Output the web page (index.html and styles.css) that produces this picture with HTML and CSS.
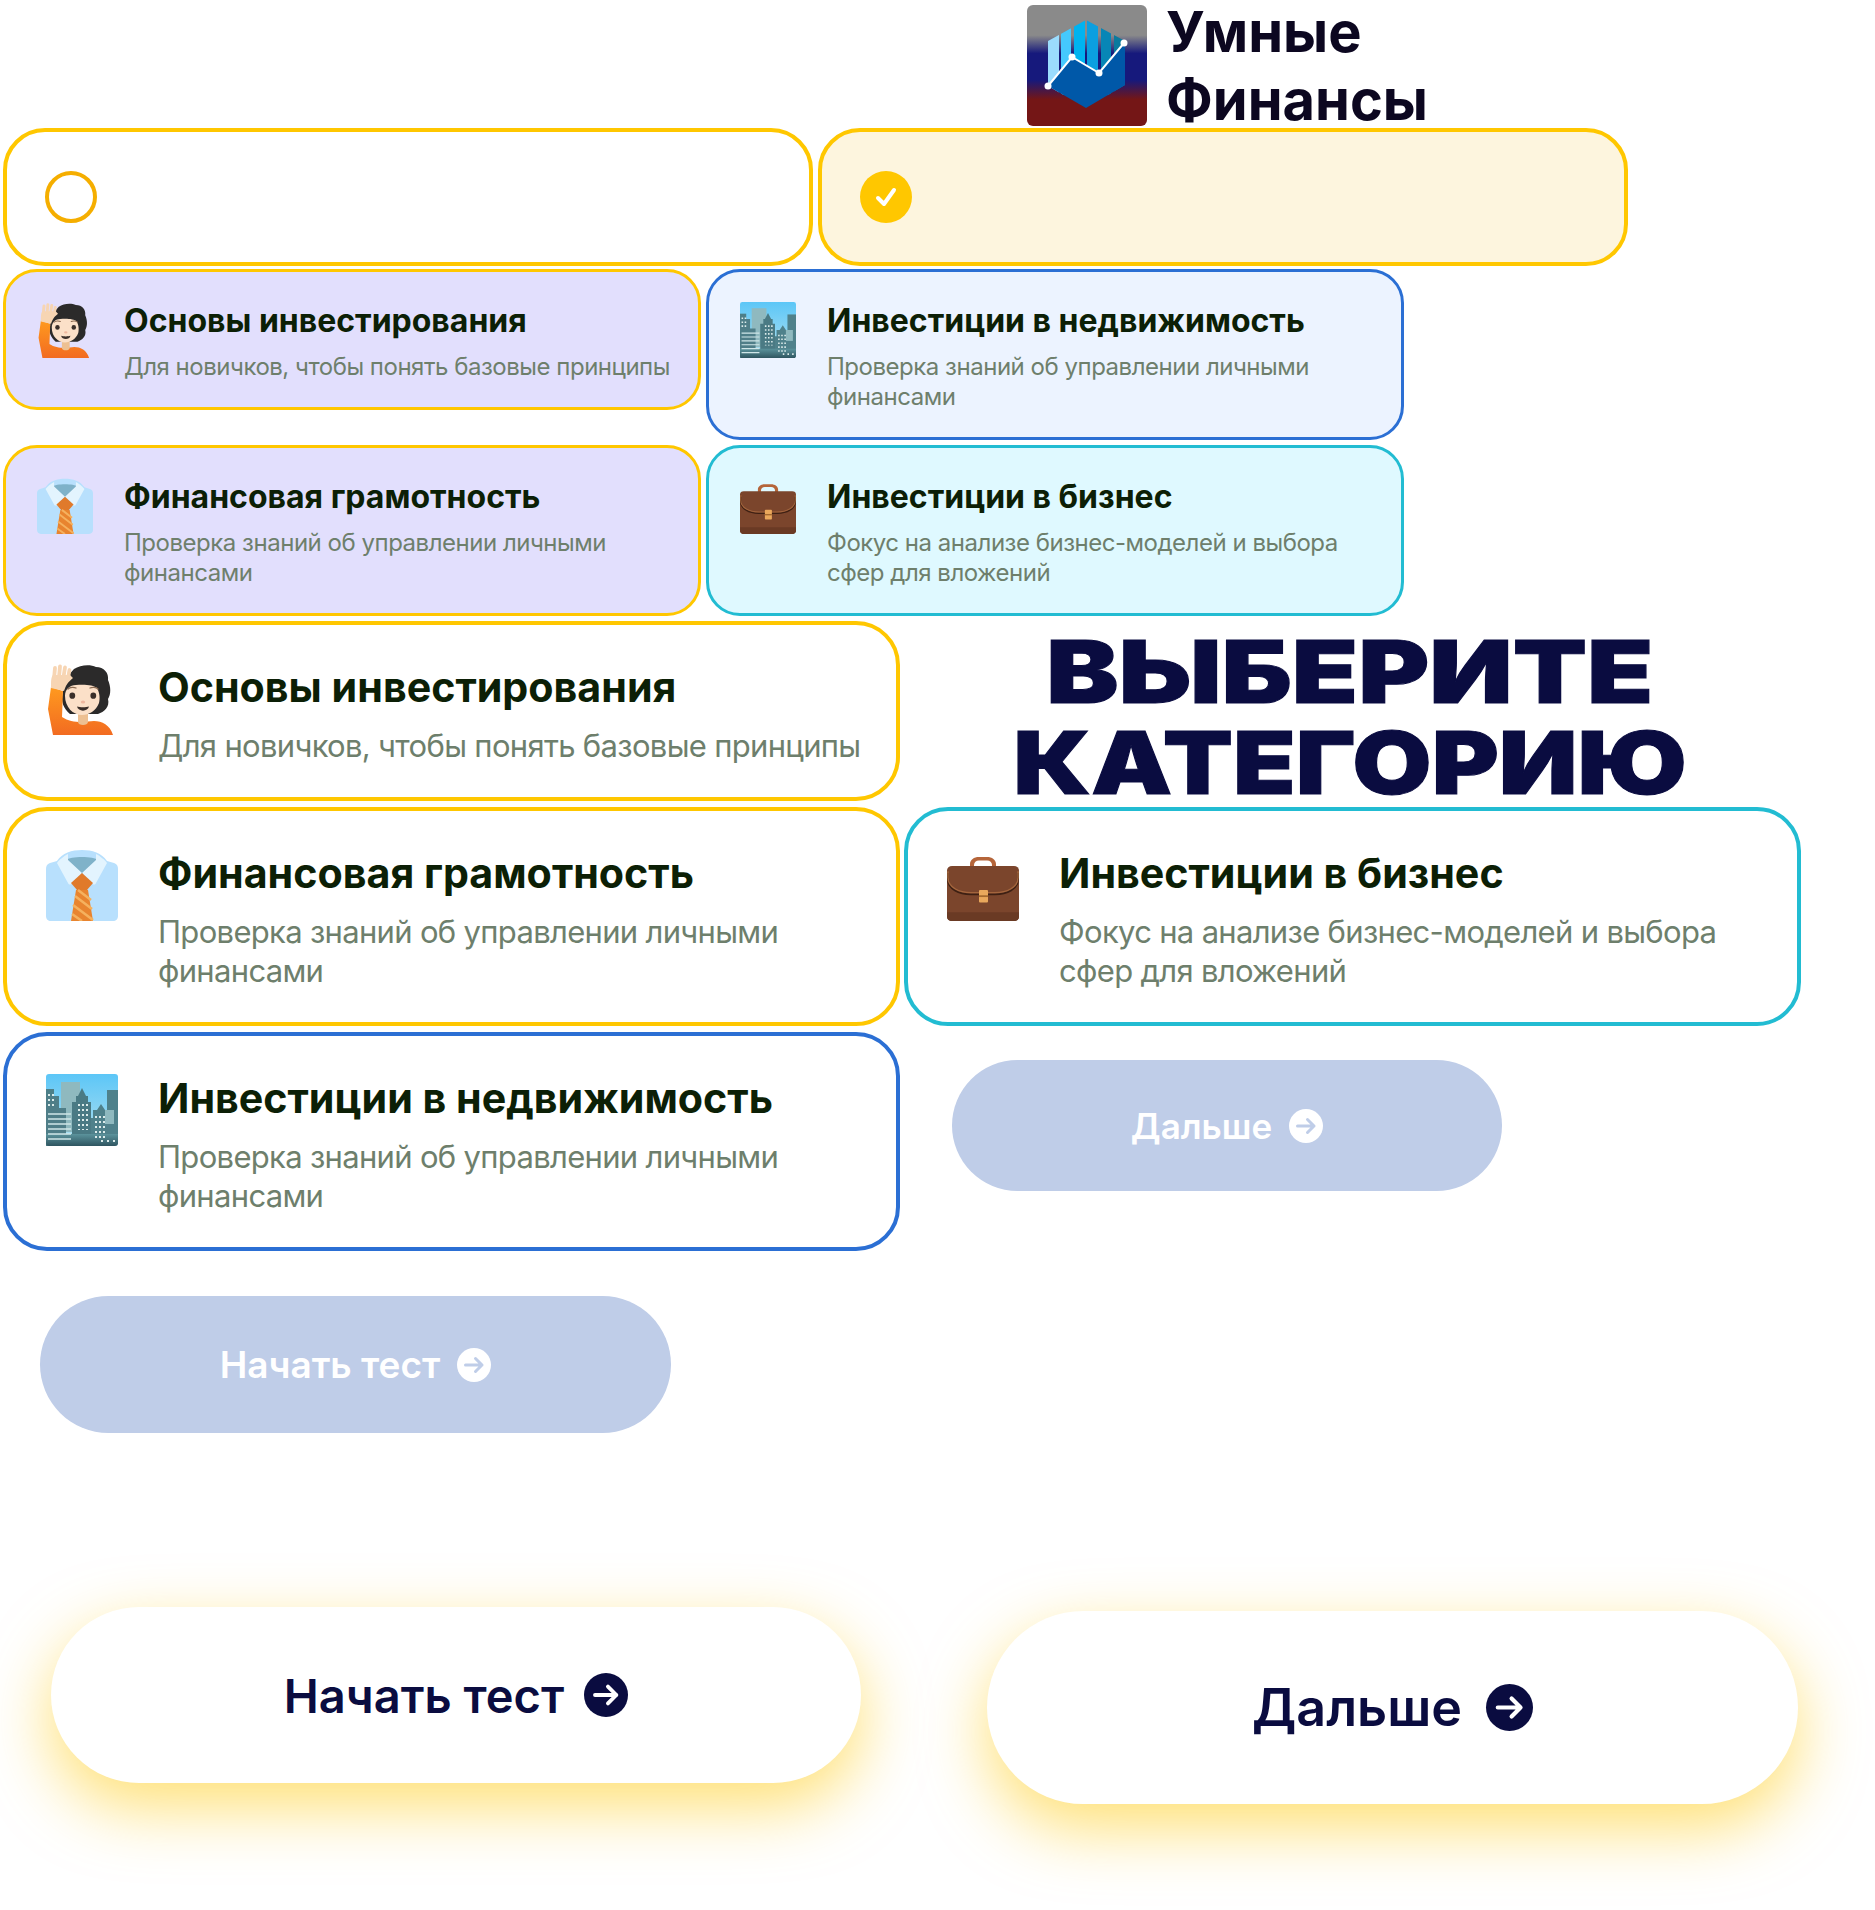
FILE: index.html
```html
<!DOCTYPE html>
<html lang="ru">
<head>
    <meta charset="UTF-8">
    <meta name="viewport" content="width=device-width, initial-scale=1.0">
    <title>Умные Финансы</title>
    <link rel="stylesheet" href="styles.css">
</head>
<body>
    <svg class="sprite" aria-hidden="true">
        <defs>
            <linearGradient id="logoBg" x1="0" y1="0" x2="0" y2="1">
                <stop offset="0.25" stop-color="#8a8a8a"/>
                <stop offset="0.4" stop-color="#16197c"/>
                <stop offset="0.62" stop-color="#16197c"/>
                <stop offset="0.78" stop-color="#741616"/>
            </linearGradient>
            <linearGradient id="sleeve" x1="0" y1="0" x2="0" y2="1">
                <stop offset="0" stop-color="#ff9a1f"/>
                <stop offset="1" stop-color="#f26b21"/>
            </linearGradient>
            <linearGradient id="sky" x1="0" y1="0" x2="0" y2="1">
                <stop offset="0" stop-color="#5cc6f7"/>
                <stop offset="1" stop-color="#b5e2ef"/>
            </linearGradient>
            <linearGradient id="street" x1="0" y1="0" x2="0" y2="1">
                <stop offset="0" stop-color="#5b939c"/>
                <stop offset="1" stop-color="#2f5560"/>
            </linearGradient>
            <clipPath id="hex"><path d="M21 36 59 15 98 36V80L59 103 21 81Z"/></clipPath>
        </defs>
        <symbol id="arrow" viewBox="0 0 34 34">
            <path d="M8.500 17H25M18.500 10.500 25 17 18.500 23.500" fill="none" stroke="currentColor" stroke-width="3" stroke-linecap="round" stroke-linejoin="round"/>
        </symbol>
        <symbol id="person" viewBox="0 0 72 72">
            <path d="M28 6C34 2 44 1 50 4 58 4 63 10 62 17 65 24 65 31 62 36 64 44 58 49 52 51L24 51C18 46 14 38 17 30 16 22 22 12 28 6Z" fill="#2b2a2a"/>
            <path d="M5 24 17 28 16 54C22 58 28 59 36 59L48 58C56 58 64 62 67 72H7L2 46Z" fill="url(#sleeve)"/>
            <path d="M32 48H42V59C42 63 32 63 32 59Z" fill="#edc092"/>
            <path d="M19 33C19 26 24 22 30 22 38 21 48 22 51 25 54 30 54 36 53 40 50 48 43 52 36 52 27 52 19 44 19 33Z" fill="#fbe0c8"/>
            <path d="M5 25C5 18 5 14 7 12H24L27 15C22 19 20 22 18 28Z" fill="#f7d5b3"/>
            <path d="M8 16 9 5M13 14 14 3.500M17.500 14 19 4.500M22 15 23.500 7" stroke="#f7d5b3" stroke-width="3.800" stroke-linecap="round" fill="none"/>
            <ellipse cx="26.300" cy="32.700" rx="2.900" ry="3.100" fill="#3a2f2a"/>
            <ellipse cx="47.300" cy="32.700" rx="2.900" ry="3.100" fill="#3a2f2a"/>
            <path d="M22 26C24 24 28 24 30 25M44 25C46 24 50 24 52 26" fill="none" stroke="#8a6a52" stroke-width="1.300" stroke-linecap="round"/>
            <ellipse cx="37" cy="39" rx="2.200" ry="1.500" fill="#efb8a0"/>
            <path d="M31 43.500C34 44.500 40 44.500 43 43.500 42 49 32 49 31 43.500Z" fill="#3a2f2a"/>
        </symbol>
        <symbol id="shirt" viewBox="0 0 72 72">
            <path d="M11 12C16 4 26 1 36 1 46 1 56 4 61 12L68 14C71 15 72 17 72 20V67C72 70 70 72 67 72H5C2 72 0 70 0 67V20C0 17 1 15 4 14Z" fill="#b8e0fd"/>
            <path d="M20 11C24 7 48 7 52 11L36 25Z" fill="#7fb2c9"/>
            <path d="M22 5C18 7 13 11 11 14L22 34C23 36 25 36 26 34L36 24 22 11Z" fill="#e3f4fe"/>
            <path d="M50 5C54 7 59 11 61 14L50 34C49 36 47 36 46 34L36 24 50 11Z" fill="#e3f4fe"/>
            <path d="M36 24 47 34 41 41H31L25 34Z" fill="#e07a2b"/>
            <path d="M30 41H42L47 72H25Z" fill="#e8842f"/>
            <path d="M29 47 46 60M27 56 47 71M26 65 36 72M32 41 45 51" stroke="#f5b15e" stroke-width="2.500" fill="none"/>
        </symbol>
        <symbol id="city" viewBox="0 0 72 72">
            <rect width="72" height="72" rx="3" fill="url(#sky)"/>
            <rect x="15" y="8" width="19" height="50" fill="#8fb9bf"/>
            <path d="M0 15H8V20H8V70H0Z" fill="#4d7f88"/>
            <path d="M8 22H13V34H20V72H0V22Z" fill="#4f7e88"/>
            <path d="M30 22H32L36 14 40 22H42V28H45V62H26V28H30Z" fill="#4a7a84"/>
            <path d="M45 44H47V36H51L55 30 59 36H62V40H72V70H45Z" fill="#4f818b"/>
            <rect x="61" y="16" width="11" height="28" fill="#4f818b"/>
            <rect x="59" y="36" width="9" height="14" fill="#8fb9bf"/>
            <path d="M0 60H72V69C72 71 71 72 69 72H3C1 72 0 71 0 69Z" fill="url(#street)"/>
            <path d="M2 40H25M2 45H25M2 50H25M2 55H25M2 60H25M2 65H25" stroke="#cfe6e8" stroke-width="1.500"/>
            <path d="M3 20V32M7 20V32M33 30V56M37 30V56M41 30V56M50 42V64M54 42V64M58 42V64M56 66V70M62 66V70M68 66V70" stroke="#dcebea" stroke-width="2" stroke-dasharray="2 3"/>
        </symbol>
        <symbol id="case" viewBox="0 0 72 72">
            <g transform="translate(0 8) scale(1 0.89)">
                <path d="M23 14V8C23 3 27 0 32 0H40C45 0 49 3 49 8V14H45V9C45 6 43 4 40 4H32C29 4 27 6 27 9V14Z" fill="#b5653a"/>
                <rect x="0" y="10" width="72" height="62" rx="5" fill="#7b452c"/>
                <path d="M0 62H72V67C72 70 70 72 67 72H5C2 72 0 70 0 67Z" fill="#6a3a24"/>
                <path d="M1 18V25C1 36 12 42 24 42H48C60 42 71 36 71 25V18" fill="none" stroke="#3e2013" stroke-width="2"/>
                <path d="M1 16V23C1 34 12 40 24 40H48C60 40 71 34 71 23V16" fill="none" stroke="#a3653d" stroke-width="1.500"/>
                <rect x="32" y="37" width="9" height="14" rx="1" fill="#eaa85c"/>
                <rect x="32" y="43" width="9" height="2" fill="#a66a2e"/>
            </g>
        </symbol>
    </svg>

    <header class="top">
        <svg class="logo" viewBox="0 0 120 121">
            <rect width="120" height="121" rx="6" fill="url(#logoBg)"/>
            <g clip-path="url(#hex)">
                <rect x="21" y="10" width="11" height="80" fill="#9bdcfd"/>
                <rect x="34" y="10" width="10" height="80" fill="#45c9fd"/>
                <rect x="47" y="10" width="11" height="80" fill="#00b3f0"/>
                <rect x="60" y="10" width="11" height="80" fill="#0b9fe0"/>
                <rect x="74" y="10" width="10" height="80" fill="#0786b6"/>
                <rect x="87" y="10" width="11" height="80" fill="#0a7a9e"/>
                <path d="M21 81 45 52 72 68 98 38V110H21Z" fill="#0058a8"/>
            </g>
            <path d="M21 81 45 52 72 68 97 38" fill="none" stroke="#fff" stroke-width="2"/>
            <circle cx="21" cy="81" r="3.500" fill="#fff"/>
            <circle cx="45" cy="52" r="3.500" fill="#fff"/>
            <circle cx="72" cy="68" r="3.500" fill="#fff"/>
            <circle cx="97" cy="38" r="3.500" fill="#fff"/>
        </svg>
        <div class="brand">Умные<br>Финансы</div>
    </header>

    <section class="radios">
        <div class="radio">
            <span class="dot"></span>
        </div>
        <div class="radio radio-on">
            <span class="dot dot-on">
                <svg viewBox="0 0 52 52"><path d="M18 27 24 33 34 19" fill="none" stroke="#fff" stroke-width="4" stroke-linecap="round" stroke-linejoin="round"/></svg>
            </span>
        </div>
    </section>

    <section class="small-grid">
        <div class="card small lilac">
            <svg class="icon"><use href="#person"/></svg>
            <div>
                <h3>Основы инвестирования</h3>
                <p>Для новичков, чтобы понять базовые принципы</p>
            </div>
        </div>
        <div class="card small sky">
            <svg class="icon"><use href="#city"/></svg>
            <div>
                <h3>Инвестиции в недвижимость</h3>
                <p>Проверка знаний об управлении личными финансами</p>
            </div>
        </div>
        <div class="card small lilac">
            <svg class="icon"><use href="#shirt"/></svg>
            <div>
                <h3>Финансовая грамотность</h3>
                <p>Проверка знаний об управлении личными финансами</p>
            </div>
        </div>
        <div class="card small aqua">
            <svg class="icon"><use href="#case"/></svg>
            <div>
                <h3>Инвестиции в бизнес</h3>
                <p>Фокус на анализе бизнес-моделей и выбора сфер для вложений</p>
            </div>
        </div>
    </section>

    <section class="big-cols">
        <div class="col">
            <div class="card big yellow first">
                <svg class="icon"><use href="#person"/></svg>
                <div>
                    <h3>Основы инвестирования</h3>
                    <p>Для новичков, чтобы понять базовые принципы</p>
                </div>
            </div>
            <div class="card big yellow">
                <svg class="icon"><use href="#shirt"/></svg>
                <div>
                    <h3>Финансовая грамотность</h3>
                    <p>Проверка знаний об управлении личными финансами</p>
                </div>
            </div>
            <div class="card big blue">
                <svg class="icon"><use href="#city"/></svg>
                <div>
                    <h3>Инвестиции в недвижимость</h3>
                    <p>Проверка знаний об управлении личными финансами</p>
                </div>
            </div>
            <button class="btn off start-off">Начать тест <svg class="arrow"><use href="#arrow"/></svg></button>
        </div>
        <div class="col">
            <h1><span class="line-one">ВЫБЕРИТЕ</span><br><span class="line-two">КАТЕГОРИЮ</span></h1>
            <div class="card big teal">
                <svg class="icon"><use href="#case"/></svg>
                <div>
                    <h3>Инвестиции в бизнес</h3>
                    <p>Фокус на анализе бизнес-моделей и выбора сфер для вложений</p>
                </div>
            </div>
            <button class="btn off next-off">Дальше <svg class="arrow"><use href="#arrow"/></svg></button>
        </div>
    </section>

    <section class="glow-row">
        <button class="btn glow start-on">Начать тест <svg class="arrow"><use href="#arrow"/></svg></button>
        <button class="btn glow next-on">Дальше <svg class="arrow"><use href="#arrow"/></svg></button>
    </section>
</body>
</html>
```

FILE: styles.css
```css
* {
    box-sizing: border-box;
}
body {
    margin: 0;
    padding: 0 0 106px 3px;
    background: white;
    font-family: Inter, 'Liberation Sans', sans-serif;
    overflow-x: hidden;
}
.sprite {
    position: absolute;
    width: 0;
    height: 0;
}
h1, h3, p {
    margin: 0;
}

/* logo row */
.top {
    display: flex;
    align-items: center;
    gap: 19px;
    height: 128px;
    padding: 3px 0 0 1024px;
}
.logo {
    width: 120px;
    height: 121px;
    flex: none;
}
.brand {
    font-size: 56px;
    line-height: 68px;
    font-weight: 700;
    color: #0c0720;
}

/* radio cards */
.radios {
    display: flex;
    gap: 5px;
}
.radio {
    width: 810px;
    height: 138px;
    padding: 0 38px;
    display: flex;
    align-items: center;
    border: 4px solid #ffc700;
    border-radius: 42px;
    background: white;
}
.radio-on {
    background: #fdf5de;
}
.dot {
    width: 52px;
    height: 52px;
    border: 4px solid #f5ae00;
    border-radius: 50%;
}
.dot-on {
    border: none;
    background: #ffc700;
}
.dot-on svg {
    display: block;
}

/* cards */
.card {
    display: flex;
    align-items: flex-start;
    background: white;
}
.card h3 {
    color: #0c1f06;
    font-weight: 700;
}
.card p {
    color: #6e7f6c;
    letter-spacing: -0.02em;
}
.icon {
    flex: none;
}
.small {
    padding: 30px 20px 25px 31px;
    gap: 31px;
    border: 3px solid #ffc700;
    border-radius: 34px;
}
.small .icon {
    width: 56px;
    height: 56px;
}
.small h3 {
    font-size: 32px;
    line-height: 38px;
    margin-bottom: 12px;
}
.small p {
    font-size: 24px;
    line-height: 30px;
}
.lilac {
    background: #e2dffd;
}
.sky {
    background: #ecf3ff;
    border-color: #2b6fd4;
}
.aqua {
    background: #dff9ff;
    border-color: #22bcd2;
}
.small-grid {
    display: grid;
    grid-template-columns: 698px 698px;
    align-items: start;
    gap: 4px 5px;
    margin-top: 3px;
}
.small-grid .lilac:first-child {
    margin-bottom: 31px;
}

.big {
    padding: 38px 24px 32px 39px;
    gap: 40px;
    border: 4px solid #ffc700;
    border-radius: 44px;
}
.big.first {
    min-height: 180px;
}
.big .icon {
    width: 72px;
    height: 72px;
}
.big h3 {
    font-size: 41.2px;
    line-height: 48px;
    margin-bottom: 15px;
}
.big p {
    font-size: 31px;
    line-height: 39px;
    letter-spacing: -0.022em;
}
.blue {
    border-color: #2b6fd4;
}
.teal {
    border-color: #22bcd2;
}
.big-cols {
    display: flex;
    gap: 4px;
    margin-top: 5px;
}
.col {
    width: 897px;
    display: flex;
    flex-direction: column;
    gap: 6px;
}
.col h1 {
    height: 182px;
    margin-top: 5px;
    margin-bottom: -7px;
    padding: 1px 6px 0 0;
    text-align: center;
    font-size: 86px;
    line-height: 91px;
    font-weight: 900;
    color: #0a0c40;
    -webkit-text-stroke: 1px #0a0c40;
}
.col h1 span {
    display: inline-block;
}
.line-one {
    transform: scaleX(1.26);
}
.line-two {
    transform: scaleX(1.19);
}

/* buttons */
.btn {
    display: flex;
    align-items: center;
    justify-content: center;
    border: none;
    border-radius: 999px;
    font-family: inherit;
    font-weight: 600;
}
.arrow {
    border-radius: 50%;
}
.off {
    background: #bfcde8;
    color: white;
    gap: 17px;
}
.off .arrow {
    width: 34px;
    height: 34px;
    background: white;
    color: #bfcde8;
}
.start-off {
    width: 631px;
    height: 137px;
    margin: 39px 0 0 37px;
    font-size: 37px;
}
.next-off {
    width: 550px;
    height: 131px;
    margin: 28px 0 0 48px;
    font-size: 35px;
}
.glow {
    background: white;
    color: #0a0c40;
    box-shadow: 0 24px 65px rgba(255, 199, 0, 0.55);
}
.glow .arrow {
    background: #0a0c40;
    color: white;
}
.glow-row {
    display: flex;
    align-items: flex-start;
    gap: 126px;
    margin-top: 174px;
    padding-left: 48px;
}
.start-on {
    width: 810px;
    height: 176px;
    font-size: 47px;
    gap: 20px;
}
.start-on .arrow {
    width: 44px;
    height: 44px;
}
.next-on {
    width: 811px;
    height: 193px;
    margin-top: 4px;
    font-size: 52px;
    gap: 24px;
}
.next-on .arrow {
    width: 47px;
    height: 47px;
}
```
